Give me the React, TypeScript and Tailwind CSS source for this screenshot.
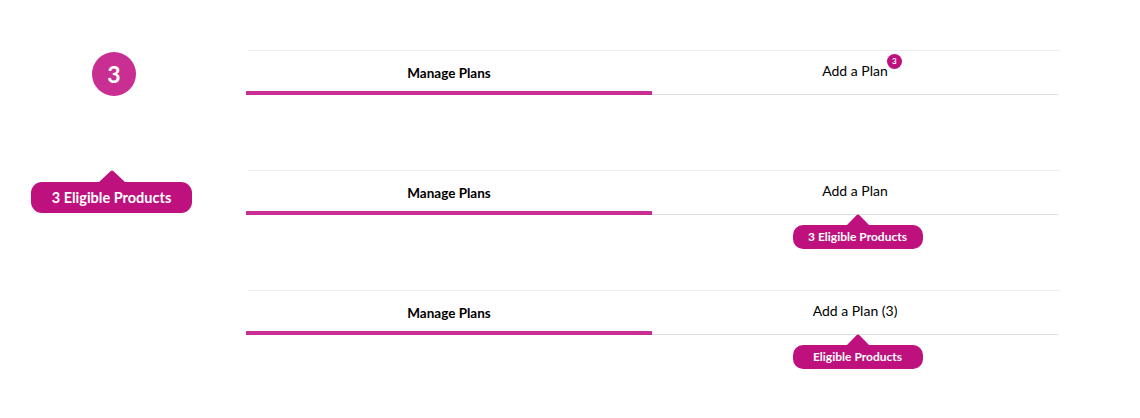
import type { ReactNode } from 'react';

const FONT = "font-['Lato','Open_Sans',sans-serif]";

function Arrow({ w, h }: { w: number; h: number }) {
  return (
    <svg width={w} height={h} viewBox={`0 0 ${w} ${h}`} className="block">
      <path d={`M0 ${h} L${w / 2 - 1.5} 1.2 Q${w / 2} -0.4 ${w / 2 + 1.5} 1.2 L${w} ${h} Z`} fill="#be117d" />
    </svg>
  );
}

function Tooltip({ children, small }: { children: ReactNode; small?: boolean }) {
  if (small) {
    return (
      <div className="flex flex-col items-center">
        <Arrow w={22} h={11} />
        <div className="flex h-[24px] w-[130px] items-center justify-center rounded-[10px] bg-[#be117d] text-[12px] font-bold text-white">
          {children}
        </div>
      </div>
    );
  }
  return (
    <div className="flex flex-col items-center">
      <Arrow w={26} h={12} />
      <div className="flex h-[31px] w-[161px] items-center justify-center rounded-[11px] bg-[#be117d] text-[14.5px] font-bold text-white">
        {children}
      </div>
    </div>
  );
}

function TabRow({ right, tip }: { right: ReactNode; tip?: ReactNode }) {
  return (
    <div className="h-[120px]">
      <div className="ml-[2px] h-px w-[812px] bg-[#eaecef]" />
      <div className="flex h-[44px] w-[812px]">
        <div className="flex w-[406px] items-center justify-center border-b-4 border-[#c92e92] pt-[4px] text-[13.5px] font-bold text-black">
          Manage Plans
        </div>
        <div className="flex w-[406px] items-center justify-center border-b border-[#dde1e5] pb-[5px] text-[14px] text-black">
          {right}
        </div>
      </div>
      {tip && (
        <div className="ml-[406px] -mt-[1px] flex w-[406px] justify-center pl-[5px]">
          <Tooltip small>{tip}</Tooltip>
        </div>
      )}
    </div>
  );
}

export default function App() {
  return (
    <div className={`flex h-[418px] w-[1140px] bg-white ${FONT}`}>
      {/* left: badge + tooltip variants */}
      <div className="w-[246px] pl-[31px]">
        <div className="ml-[61px] mt-[52px] flex h-[44px] w-[44px] items-center justify-center rounded-full bg-[#c92e92] text-[23px] font-bold text-white">
          3
        </div>
        <div className="mt-[74px] w-[161px]">
          <Tooltip>3 Eligible Products</Tooltip>
        </div>
      </div>

      {/* right: tab rows */}
      <div className="pt-[50px]">
        <TabRow
          right={
            <span className="relative">
              Add a Plan
              <span className="absolute left-full -top-[6px] -ml-[1px] flex h-[15px] w-[15px] items-center justify-center rounded-full bg-[#be117d] text-[8px] font-bold text-white">
                3
              </span>
            </span>
          }
        />
        <TabRow right="Add a Plan" tip="3 Eligible Products" />
        <TabRow right="Add a Plan (3)" tip="Eligible Products" />
      </div>
    </div>
  );
}
